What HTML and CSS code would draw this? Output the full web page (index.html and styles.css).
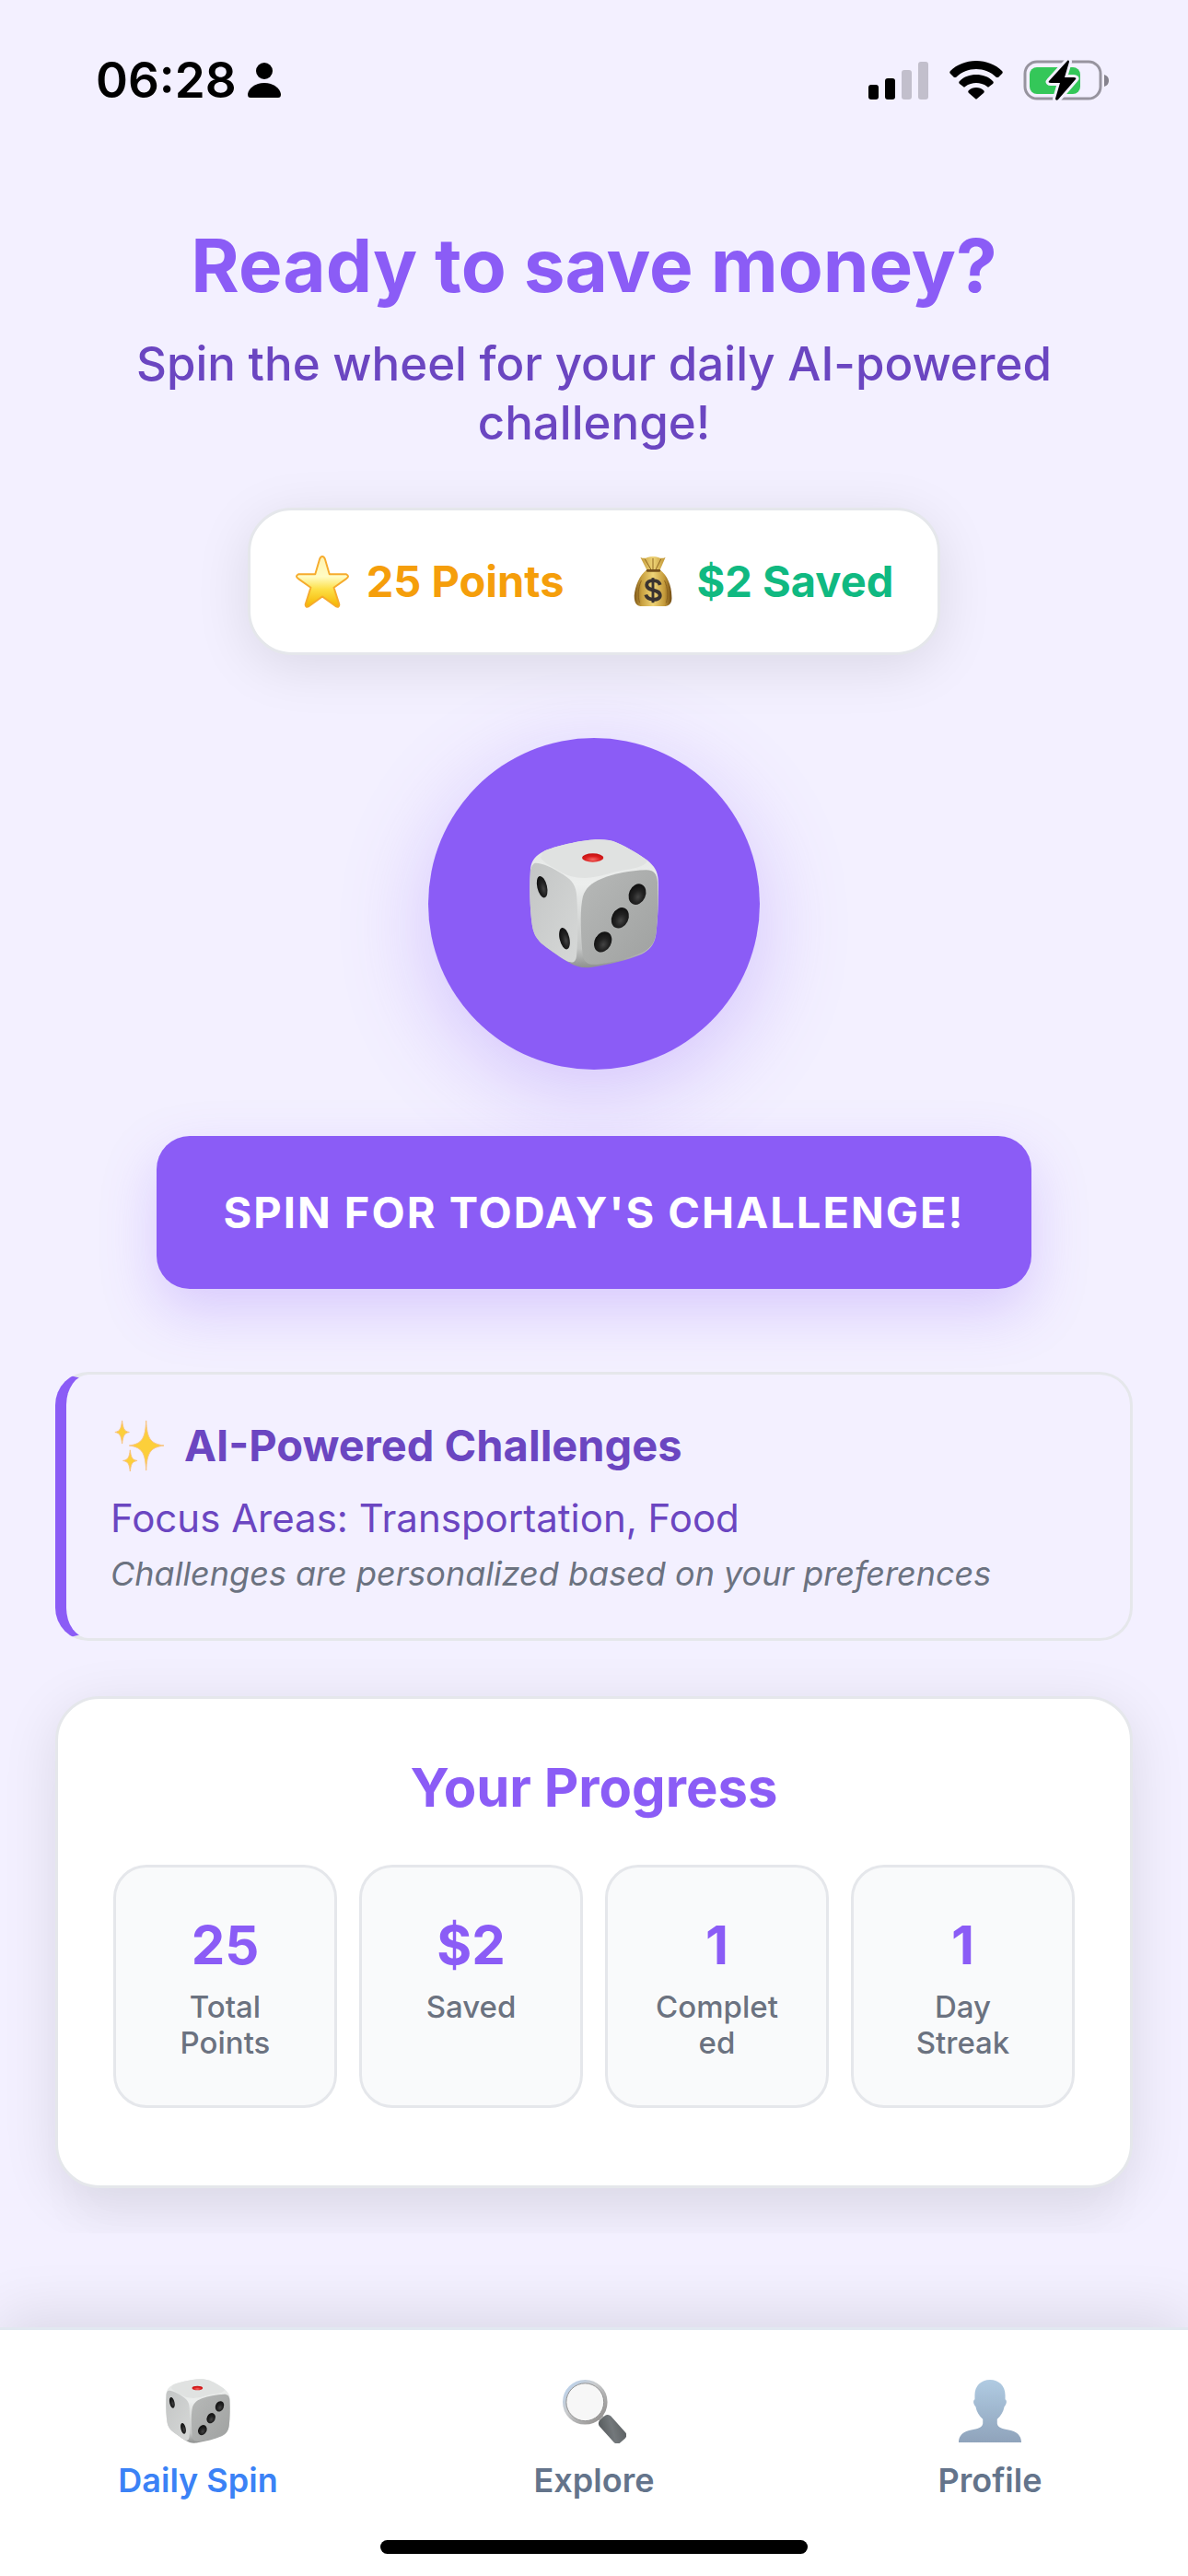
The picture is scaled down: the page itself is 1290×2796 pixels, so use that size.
FILE: index.html
```
<!DOCTYPE html>
<html lang="en">
<head>
    <meta charset="UTF-8">
    <meta name="viewport" content="width=device-width, initial-scale=1.0">
    <title>Daily Spin</title>
    <link rel="stylesheet" href="styles.css">
</head>
<body>
    <!-- Shared icon shapes -->
    <svg class="defs" width="0" height="0" aria-hidden="true">
        <defs>
            <linearGradient id="dice-left" x1="0" y1="0" x2="1" y2="1">
                <stop offset="0" stop-color="#c3c5c5"/>
                <stop offset="1" stop-color="#d6d8d7"/>
            </linearGradient>
            <linearGradient id="dice-right" x1="0" y1="0" x2="1" y2="1">
                <stop offset="0" stop-color="#b7b9b8"/>
                <stop offset="1" stop-color="#9fa1a0"/>
            </linearGradient>
            <linearGradient id="dice-body" x1="0" y1="0" x2="0" y2="1">
                <stop offset="0" stop-color="#e3e5e4"/>
                <stop offset="0.35" stop-color="#eceeed"/>
                <stop offset="0.85" stop-color="#c4c6c5"/>
                <stop offset="1" stop-color="#8e908f"/>
            </linearGradient>
            <radialGradient id="dice-pip" cx="0.6" cy="0.6" r="0.6">
                <stop offset="0" stop-color="#444"/>
                <stop offset="0.5" stop-color="#222"/>
                <stop offset="1" stop-color="#111"/>
            </radialGradient>
            <radialGradient id="dice-red" cx="0.5" cy="0.7" r="0.6">
                <stop offset="0" stop-color="#f26a66"/>
                <stop offset="0.6" stop-color="#dc1f1f"/>
                <stop offset="1" stop-color="#c81414"/>
            </radialGradient>
            <symbol id="dice" viewBox="0 0 420 420">
                <path fill="url(#dice-body)" d="M45 40C80 22 170 3 215 1 245 0 265 2 285 11 320 26 360 50 384 68 408 88 417 106 419 130 421 190 419 240 413 300 409 340 396 358 365 374 320 393 260 407 200 417 170 420 150 414 130 402 95 380 60 356 38 338 14 314 10 294 6 260 0 200 0 150 3 95 8 65 22 52 45 40Z"/>
                <path fill="#e0e2e1" d="M45 40C80 22 170 3 215 1 245 0 265 2 285 11 320 26 360 50 384 70 375 90 340 96 300 101 265 107 235 122 180 126 145 125 120 118 98 104 72 88 50 80 36 60Z"/>
                <path fill="url(#dice-left)" d="M18 77C40 76 75 91 110 115 140 135 152 150 154 190 158 260 158 320 153 380 150 402 140 404 122 397 90 377 60 356 38 338 14 314 10 294 6 260 0 200 0 150 3 100 6 88 10 80 18 77Z"/>
                <path fill="url(#dice-right)" d="M168 300C166 250 167 215 174 185 183 158 200 142 235 128 280 111 325 102 380 100 405 100 415 112 417 140 420 200 418 250 413 300 408 338 396 355 365 370 320 388 270 401 220 407 190 410 178 402 173 375 170 350 169 325 168 300Z"/>
                <ellipse cx="206" cy="60" rx="35" ry="14" fill="url(#dice-red)"/>
                <ellipse cx="41" cy="155" rx="16" ry="36" transform="rotate(-13 41 155)" fill="url(#dice-pip)"/>
                <ellipse cx="114" cy="323" rx="16" ry="36" transform="rotate(-13 114 323)" fill="url(#dice-pip)"/>
                <ellipse cx="351" cy="179" rx="27" ry="35" transform="rotate(24 351 179)" fill="url(#dice-pip)"/>
                <ellipse cx="295" cy="256" rx="27" ry="35" transform="rotate(26 295 256)" fill="url(#dice-pip)"/>
                <ellipse cx="239" cy="334" rx="27" ry="35" transform="rotate(28 239 334)" fill="url(#dice-pip)"/>
            </symbol>
        </defs>
    </svg>

    <header class="status-bar">
        <div class="status-time">
            <span>06:28</span>
            <svg width="36" height="38" viewBox="0 0 36 38" aria-hidden="true">
                <circle cx="18" cy="9" r="9"/>
                <path d="M18 22C28 22 35 28 36 34 36 37 35 38 33 38H3C1 38 0 37 0 34 1 28 8 22 18 22Z"/>
            </svg>
        </div>
        <div class="status-icons">
            <svg width="66" height="42" viewBox="0 0 66 42" aria-hidden="true">
                <rect x="0" y="26" width="11" height="16" rx="3"/>
                <rect x="18" y="19" width="11" height="23" rx="3"/>
                <rect x="36" y="10" width="11" height="32" rx="3" fill="#c2bfcc"/>
                <rect x="54" y="1" width="11" height="41" rx="3" fill="#c2bfcc"/>
            </svg>
            <svg width="58" height="42" viewBox="0 0 58 42" aria-hidden="true">
                <path d="M29 0C40 0 50 4 57 11 58 12 58 13 57 14L53 18C52 18 52 18 51 18 45 12 37 9 29 9 21 9 13 12 7 18 6 18 6 18 5 18L1 14C0 13 0 12 1 11 8 4 18 0 29 0Z"/>
                <path d="M29 15C36 15 42 17 47 22 48 23 48 24 47 25L43 28C42 29 42 29 41 28 37 25 33 24 29 24 25 24 21 25 17 28 16 29 16 29 15 28L11 25C10 24 10 23 11 22 16 17 22 15 29 15Z"/>
                <path d="M29 29C32 29 35 30 37 32 38 33 38 34 37 35L30 41C29 42 29 42 28 41L21 35C20 34 20 33 21 32 23 30 26 29 29 29Z"/>
            </svg>
            <svg width="94" height="46" viewBox="0 0 94 46" aria-hidden="true">
                <rect x="2" y="3" width="82" height="40" rx="13" fill="none" stroke="#97949f" stroke-width="3"/>
                <path fill="#85828d" d="M88 17C91 18 93 20 93 23 93 27 91 29 88 30Z"/>
                <rect x="7" y="9" width="55" height="29" rx="8" fill="#34c759"/>
                <path class="bolt" d="M48 2C49 1 50 2 50 3L45 20H55C57 20 58 21 57 22L38 44C37 45 35 45 35 43L40 26H30C28 26 27 25 28 24Z"/>
            </svg>
        </div>
    </header>

    <main class="content">
        <h1 class="title">Ready to save money?</h1>
        <p class="subtitle">Spin the wheel for your daily AI-powered challenge!</p>

        <div class="summary">
            <div class="summary-item points">
                <svg class="emoji" viewBox="0 0 60 60" aria-hidden="true">
                    <defs>
                        <linearGradient id="star" x1="0" y1="0" x2="0" y2="1">
                            <stop offset="0" stop-color="#fff3b0"/>
                            <stop offset="0.4" stop-color="#fffcc4"/>
                            <stop offset="0.65" stop-color="#fde047"/>
                            <stop offset="1" stop-color="#f5b400"/>
                        </linearGradient>
                    </defs>
                    <path fill="url(#star)" stroke="#f6ab2c" stroke-width="2" stroke-linejoin="round" d="M30 2Q32 2 33 5L38 22 57 22Q61 24 57 27L43 37 49 56Q49 60 45 58L30 47 15 58Q11 60 11 56L17 37 3 27Q-1 24 3 22L22 22 27 5Q28 2 30 2Z"/>
                </svg>
                <span>25 Points</span>
            </div>
            <div class="summary-item saved">
                <svg class="emoji" viewBox="0 0 60 60" aria-hidden="true">
                    <defs>
                        <linearGradient id="bag" x1="0" y1="0" x2="1" y2="0">
                            <stop offset="0" stop-color="#7e5717"/>
                            <stop offset="0.2" stop-color="#c8a040"/>
                            <stop offset="0.5" stop-color="#efd477"/>
                            <stop offset="0.8" stop-color="#c59b3b"/>
                            <stop offset="1" stop-color="#704a12"/>
                        </linearGradient>
                    </defs>
                    <path fill="url(#bag)" d="M16 3Q20 5 24 3 30 1 36 3 40 5 44 3L38 17C46 23 51 35 51 46 52 55 48 58 42 58H18C12 58 9 55 9 46 10 35 15 23 23 17Z"/>
                    <path fill="none" stroke="#8d641d" stroke-width="1" d="M21 5L28 17M30 4V17M39 5L33 17M17 29C13 38 13 47 15 54M43 29C47 38 47 47 45 54"/>
                    <path fill="none" stroke="#74501b" stroke-width="3" stroke-linecap="round" d="M24 18H37"/>
                    <path fill="none" stroke="#3a3330" stroke-width="4" d="M38 34C36 27 23 28 23 34 23 42 38 38 38 46 38 52 24 52 22 45"/>
                    <path fill="none" stroke="#3a3330" stroke-width="3" d="M30 26V54"/>
                </svg>
                <span>$2 Saved</span>
            </div>
        </div>

        <div class="wheel">
            <svg class="wheel-dice" aria-hidden="true"><use href="#dice"/></svg>
        </div>

        <button class="spin-button" type="button">SPIN FOR TODAY'S CHALLENGE!</button>

        <section class="ai-card">
            <h2 class="ai-title">
                <svg class="emoji" viewBox="0 0 60 60" aria-hidden="true">
                    <g fill="#fccf3a" stroke="#f8c382" stroke-width="1">
                        <path d="M39 2C40 21 43 28 59 30 43 32 40 39 39 58 38 39 35 32 20 30 35 28 38 21 39 2Z"/>
                        <path d="M12 2C13 10 14 14 20 15 14 16 13 20 12 28 11 20 10 16 4 15 10 14 11 10 12 2Z"/>
                        <path d="M21 35C22 43 23 46 29 47 23 48 22 51 21 59 20 51 19 48 13 47 19 46 20 43 21 35Z"/>
                    </g>
                </svg>
                AI-Powered Challenges
            </h2>
            <p class="ai-focus">Focus Areas: Transportation, Food</p>
            <p class="ai-note">Challenges are personalized based on your preferences</p>
        </section>

        <section class="progress-card">
            <h2 class="progress-title">Your Progress</h2>
            <div class="stats">
                <div class="stat-box">
                    <div class="stat-number">25</div>
                    <div class="stat-label">Total Points</div>
                </div>
                <div class="stat-box">
                    <div class="stat-number">$2</div>
                    <div class="stat-label">Saved</div>
                </div>
                <div class="stat-box">
                    <div class="stat-number">1</div>
                    <div class="stat-label">Completed</div>
                </div>
                <div class="stat-box">
                    <div class="stat-number">1</div>
                    <div class="stat-label">Day Streak</div>
                </div>
            </div>
        </section>
    </main>

    <footer class="tab-bar">
        <nav class="tabs">
            <a class="tab active" href="#spin">
                <svg class="tab-icon" aria-hidden="true"><use href="#dice"/></svg>
                <span>Daily Spin</span>
            </a>
            <a class="tab" href="#explore">
                <svg class="tab-icon" viewBox="0 0 72 72" aria-hidden="true">
                    <defs>
                        <linearGradient id="rim" x1="0" y1="0" x2="1" y2="1">
                            <stop offset="0" stop-color="#b9d4f3"/>
                            <stop offset="0.4" stop-color="#c9cbcd"/>
                            <stop offset="1" stop-color="#8c8987"/>
                        </linearGradient>
                        <linearGradient id="grip" x1="0" y1="1" x2="1" y2="0">
                            <stop offset="0" stop-color="#55595b"/>
                            <stop offset="0.5" stop-color="#73787b"/>
                            <stop offset="1" stop-color="#5b5f61"/>
                        </linearGradient>
                    </defs>
                    <path stroke="#b4b4b4" stroke-width="7" d="M40 40L49 49"/>
                    <circle cx="26" cy="26" r="23" fill="#f7f7f7" stroke="url(#rim)" stroke-width="4"/>
                    <circle cx="26" cy="26" r="21" fill="none" stroke="#8f8f8f" stroke-width="1"/>
                    <rect x="40" y="48" width="34" height="17" rx="5" transform="rotate(48 57 56)" fill="url(#grip)"/>
                </svg>
                <span>Explore</span>
            </a>
            <a class="tab" href="#profile">
                <svg class="tab-icon" viewBox="0 0 72 72" aria-hidden="true">
                    <defs>
                        <linearGradient id="bust" x1="0" y1="0" x2="0" y2="1">
                            <stop offset="0" stop-color="#b0cbe2"/>
                            <stop offset="1" stop-color="#8fa3bb"/>
                        </linearGradient>
                    </defs>
                    <path fill="url(#bust)" d="M36 1C46 1 53 8 53 18V23C55 24 55 28 52 31 51 37 48 41 44 45V50C45 55 50 56 57 57 66 59 71 63 71 71H1C1 63 6 59 15 57 22 56 27 55 28 50V45C24 41 21 37 20 31 17 28 17 24 19 23V18C19 8 26 1 36 1Z"/>
                </svg>
                <span>Profile</span>
            </a>
        </nav>
        <div class="home-indicator"></div>
    </footer>
</body>
</html>
```

FILE: styles.css
```
* {
    margin: 0;
    padding: 0;
    box-sizing: border-box;
}

body {
    font-family: Inter, 'Liberation Sans', sans-serif;
    background: #f3f0ff;
    color: #6b46c1;
    min-height: 100vh;
    display: flex;
    flex-direction: column;
}

.defs {
    position: absolute;
}

.status-bar {
    display: flex;
    justify-content: space-between;
    align-items: center;
    height: 174px;
    padding: 0 85px 0 104px;
    color: #000;
}

.status-time {
    display: flex;
    align-items: center;
    gap: 12px;
    font-size: 53px;
    font-weight: 600;
}

.status-icons {
    display: flex;
    align-items: center;
    gap: 22px;
}

.bolt {
    stroke: #f3f0ff;
    stroke-width: 6px;
    stroke-linejoin: round;
    paint-order: stroke;
}

.content {
    flex: 1 0 auto;
    display: flex;
    flex-direction: column;
    align-items: center;
    padding: 64px 60px 48px;
    overflow: hidden;
}

.title {
    font-size: 80px;
    line-height: 100px;
    font-weight: 700;
    color: #8b5cf6;
    text-align: center;
    margin-bottom: 25px;
}

.subtitle {
    font-size: 51px;
    line-height: 64px;
    font-weight: 500;
    text-align: center;
    padding: 0 60px;
    margin-bottom: 60px;
}

.emoji {
    width: 60px;
    height: 58px;
    flex-shrink: 0;
}

.summary {
    display: flex;
    gap: 66px;
    padding: 48px;
    background: #fff;
    border: 3px solid #e5e7eb;
    border-radius: 48px;
    box-shadow: 0 12px 60px rgba(0, 0, 0, 0.1);
    margin-bottom: 90px;
}

.summary-item {
    display: flex;
    align-items: center;
    gap: 18px;
    font-size: 47px;
    line-height: 58px;
    font-weight: 700;
}

.points {
    color: #f59e0b;
}

.saved {
    color: #10b981;
}

.wheel {
    display: flex;
    align-items: center;
    justify-content: center;
    width: 360px;
    height: 360px;
    border-radius: 50%;
    background: #8b5cf6;
    box-shadow: 0 24px 96px rgba(139, 92, 246, 0.3);
    margin-bottom: 72px;
}

.wheel-dice {
    width: 140px;
    height: 140px;
}

.spin-button {
    padding: 54px 72px;
    border: none;
    border-radius: 36px;
    background: #8b5cf6;
    color: #fff;
    font-family: inherit;
    font-size: 47px;
    line-height: 58px;
    font-weight: 700;
    letter-spacing: 2px;
    box-shadow: 0 24px 60px rgba(139, 92, 246, 0.25);
    margin-bottom: 90px;
    cursor: pointer;
}

.ai-card {
    align-self: stretch;
    padding: 48px;
    border: 3px solid #e5e7eb;
    border-left: 12px solid #8b5cf6;
    border-radius: 36px;
    margin-bottom: 60px;
}

.ai-title {
    display: flex;
    align-items: center;
    gap: 20px;
    font-size: 47px;
    line-height: 58px;
    font-weight: 700;
    margin-bottom: 24px;
}

.ai-focus {
    font-size: 42px;
    line-height: 52px;
    margin-bottom: 12px;
}

.ai-note {
    font-size: 36px;
    line-height: 44px;
    font-style: italic;
    color: #6b7280;
}

.progress-card {
    align-self: stretch;
    padding: 60px 60px 84px;
    background: #fff;
    border: 3px solid #e5e7eb;
    border-radius: 48px;
    box-shadow: 0 12px 60px rgba(0, 0, 0, 0.1), 0 60px 48px -12px rgba(0, 0, 0, 0.02);
}

.progress-title {
    font-size: 58px;
    line-height: 72px;
    font-weight: 700;
    color: #8b5cf6;
    text-align: center;
    margin-bottom: 48px;
}

.stats {
    display: grid;
    grid-template-columns: repeat(4, 1fr);
    gap: 24px;
}

.stat-box {
    padding: 48px;
    background: #f9fafb;
    border: 3px solid #e5e7eb;
    border-radius: 36px;
    text-align: center;
}

.stat-number {
    font-size: 58px;
    line-height: 72px;
    font-weight: 700;
    color: #8b5cf6;
    margin-bottom: 12px;
}

.stat-label {
    font-size: 33px;
    line-height: 39px;
    font-weight: 500;
    color: #6b7280;
    overflow-wrap: anywhere;
}

.tab-bar {
    margin-top: 102px;
    padding: 53px 0 24px;
    background: #fff;
    border-top: 3px solid #e2e8f0;
    box-shadow: 0 -12px 60px rgba(0, 0, 0, 0.1);
}

.tabs {
    display: grid;
    grid-template-columns: repeat(3, 1fr);
}

.tab {
    display: flex;
    flex-direction: column;
    align-items: center;
    gap: 18px;
    font-size: 36px;
    line-height: 44px;
    font-weight: 600;
    color: #64748b;
    text-decoration: none;
}

.tab.active {
    color: #3b82f6;
}

.tab-icon {
    width: 70px;
    height: 70px;
}

.home-indicator {
    width: 36%;
    height: 15px;
    margin: 43px auto 0;
    border-radius: 8px;
    background: #000;
}
```
